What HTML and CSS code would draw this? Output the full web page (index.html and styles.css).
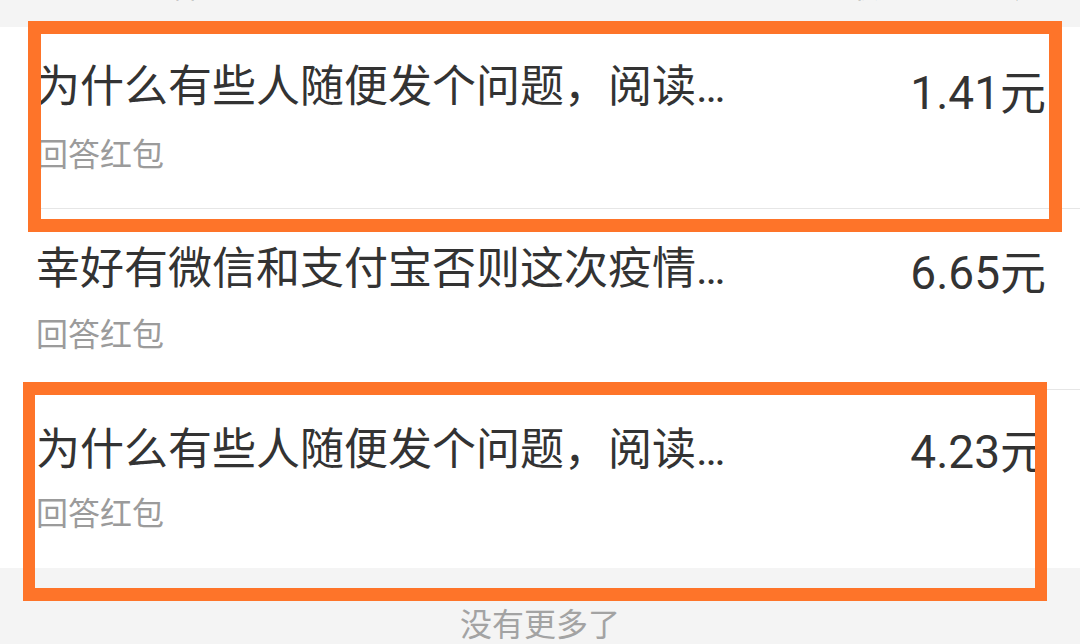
FILE: index.html
```html
<!DOCTYPE html>
<html lang="zh">
<head>
<meta charset="utf-8">
<link rel="stylesheet" href="styles.css">
</head>
<body>
<div class="page">
  <div class="header">
    <span class="header-left">回答红包</span>
    <span class="header-right">红包收入：12.29元</span>
  </div>
  <div class="list">
    <div class="row row-first">
      <div class="row-main">
        <div class="title">为什么有些人随便发个问题，阅读…</div>
        <div class="price price-low">1.41元</div>
      </div>
      <div class="sub">回答红包</div>
    </div>
    <div class="row row-mid">
      <div class="row-main">
        <div class="title">幸好有微信和支付宝否则这次疫情…</div>
        <div class="price">6.65元</div>
      </div>
      <div class="sub">回答红包</div>
    </div>
    <div class="row row-last">
      <div class="row-main">
        <div class="title">为什么有些人随便发个问题，阅读…</div>
        <div class="price price-high">4.23元</div>
      </div>
      <div class="sub">回答红包</div>
    </div>
  </div>
  <div class="footer">没有更多了</div>
  <div class="mark mark-one"></div>
  <div class="mark mark-two"></div>
</div>
</body>
</html>
```

FILE: styles.css
```css
html, body {
  margin: 0;
  padding: 0;
}
body {
  background: #f4f4f4;
  font-family: Roboto, "Noto Sans CJK SC", sans-serif;
  color: #333;
}
.page {
  position: relative;
  width: 1080px;
  height: 644px;
  overflow: hidden;
  background: #f4f4f4;
}
.header {
  height: 27px;
  overflow: hidden;
  display: flex;
  justify-content: space-between;
  padding: 0 36px 0 140px;
  box-sizing: border-box;
}
.header span {
  font-size: 30px;
  line-height: 30px;
  margin-top: -28px;
  color: #444;
}
.list {
  background: #fff;
}
.row {
  box-sizing: border-box;
  padding: 38px 34px 0 36px;
  position: relative;
}
.row-first {
  height: 182px;
}
.row-mid {
  height: 181px;
}
.row-last {
  height: 178px;
}
.row-first::after,
.row-mid::after {
  content: "";
  position: absolute;
  left: 36px;
  right: 0;
  bottom: 0;
  height: 1px;
  background: #e6e6e6;
}
.row-main {
  display: flex;
  align-items: flex-start;
  justify-content: space-between;
}
.title {
  font-size: 44px;
  line-height: 44px;
  white-space: nowrap;
  color: #333;
}
.price {
  font-size: 46px;
  line-height: 46px;
  padding-top: 3px;
  color: #333;
  white-space: nowrap;
}
.price-low {
  padding-top: 5px;
}
.price-high {
  padding-top: 1px;
}
.sub {
  margin-top: 23px;
  font-size: 32px;
  line-height: 32px;
  color: #9b9b9b;
}
.footer {
  padding-top: 41px;
  text-align: center;
  font-size: 32px;
  line-height: 32px;
  color: #a3a3a3;
}
.mark {
  position: absolute;
  box-sizing: border-box;
  border: 13px solid #fe7429;
}
.mark-one {
  left: 28px;
  top: 21px;
  width: 1034px;
  height: 211px;
}
.mark-two {
  left: 23px;
  top: 382px;
  width: 1024px;
  height: 219px;
  border-width: 13px 12px;
}
```
